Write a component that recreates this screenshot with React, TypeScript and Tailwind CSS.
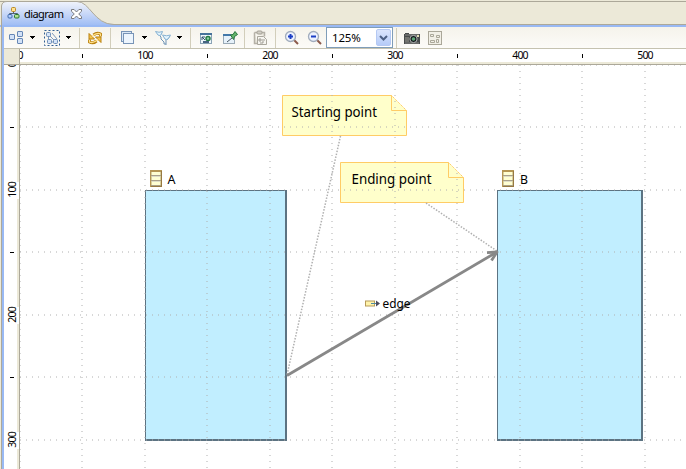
import React from "react";

const ui = "font-['Noto_Sans','DejaVu_Sans',sans-serif]";

function Icon({ children, className = "" }: { children: React.ReactNode; className?: string }) {
  return (
    <svg width="16" height="16" viewBox="0 0 16 16" className={`block shrink-0 ${className}`} fill="none">
      {children}
    </svg>
  );
}

function Caret({ className = "" }: { className?: string }) {
  return (
    <svg width="5" height="3" viewBox="0 0 5 3" className={`block shrink-0 ${className}`} shapeRendering="crispEdges">
      <path d="M0 0h5v1H4v1H3v1H2V2H1V1H0z" fill="#000" />
    </svg>
  );
}

function Sep({ className = "" }: { className?: string }) {
  return <div className={`h-[20px] w-px shrink-0 bg-[#d2cebb] ${className}`} />;
}

function RefreshArrow() {
  return (
    <>
      <path d="M13.5 6.5V4Q10 2 6.5 5" stroke="#b9800f" strokeWidth="3" />
      <path d="M2 3.5v5.500h5.500z" fill="#f5c34a" stroke="#b9800f" strokeLinejoin="round" />
      <path d="M13.500 6V4Q10 2 5 6.500" stroke="#ffe08a" strokeWidth="1.300" />
    </>
  );
}

function Magnifier({ plus }: { plus: boolean }) {
  return (
    <>
      <path d="M10 10l4 4" stroke="#8b5a4a" strokeWidth="2" />
      <circle cx="6.5" cy="6.5" r="5" fill="#edf2ff" stroke="#a2adbd" strokeWidth="1.3" />
      <path d="M4 6.5h5" stroke="#1b3fc4" strokeWidth="2" />
      {plus && <path d="M6.5 4v5" stroke="#1b3fc4" strokeWidth="2" />}
    </>
  );
}

function TabBar() {
  return (
    <div className="relative h-[27px] w-full border-b-2 border-[#99b9f4] bg-[#ece9d8]">
      <svg width="686" height="27" viewBox="0 0 686 27" className="absolute left-0 top-0 block">
        <defs>
          <linearGradient id="tab" x1="0" y1="0" x2="0" y2="1">
            <stop offset="0" stopColor="#f1f4fb" />
            <stop offset=".5" stopColor="#c6d6f7" />
            <stop offset="1" stopColor="#99b9f4" />
          </linearGradient>
        </defs>
        <path d="M0 1.5H686M100 24.5H686" stroke="#aca899" />
        <path d="M1.5 27V6Q2 1.5 7 1.5H77C90 1.5 94 24.5 114 24.5V27z" fill="url(#tab)" />
        <path d="M1.5 27V6Q2 1.5 7 1.5H77C90 1.5 94 24.5 114 24.5" fill="none" stroke="#aca899" />
        <path d="M2 25h684v2H2z" fill="#99b9f4" />
      </svg>
      <div className="relative flex h-[25px] items-center pl-[7px] pt-[2px]">
        <svg width="13" height="13" viewBox="0 0 13 13" className="block" fill="none">
          <path d="M6.5 4v3M2.5 9V6.5h8V9" stroke="#526273" />
          <rect x="4.5" y=".5" width="4" height="4" rx="1" fill="#ffe292" stroke="#b88925" />
          <rect x="1" y="7.5" width="4" height="3.5" rx="1" fill="#b4ceff" stroke="#3c68aa" />
          <rect x="7.5" y="7.5" width="4.5" height="3.5" rx="1" fill="#b2e092" stroke="#28782e" />
        </svg>
        <span className={`ml-[4px] w-[39px] whitespace-nowrap text-[11px] leading-[14px] tracking-[-0.55px] text-black ${ui}`}>
          diagram
        </span>
        <svg width="11" height="10" viewBox="0 0 11 10" className="ml-[8px] block">
          <path
            d="M.5 .5h2.6L5.5 3 7.9.5h2.6v1.8L7.7 5l2.8 2.7v1.8H7.9L5.5 7 3.1 9.5H.5V7.7L3.3 5 .5 2.3z"
            fill="#fff"
            stroke="#6e6e70"
            strokeWidth=".9"
          />
        </svg>
      </div>
    </div>
  );
}

function Toolbar() {
  return (
    <div className="flex h-[22px] items-center border-b border-[#c5c2b0] bg-gradient-to-b from-[#f5f3eb] to-[#fcfbf8]">
      <Icon className="ml-[5px]">
        <g fill="#d3e2f7" stroke="#6687b5">
          <rect x=".5" y="4.5" width="5" height="5" rx=".5" />
          <rect x="8.5" y="1.5" width="5" height="5" rx=".5" />
          <rect x="8.5" y="8.5" width="5" height="5" rx=".5" />
        </g>
      </Icon>
      <Caret className="ml-[5px]" />
      <Icon className="ml-[9px]">
        <rect x=".5" y=".5" width="15" height="15" stroke="#315e92" strokeDasharray="2 2" />
        <path d="M4.5 5v7M5 5l7 7M4 12h8M8 3l5 6" stroke="#7d99bd" />
        <g fill="#d5e4f8" stroke="#6d8db7">
          <rect x="2.5" y="2.5" width="4" height="4" rx="1" />
          <rect x="3.5" y="9.5" width="4" height="4" rx="1" />
          <rect x="9.5" y="9.5" width="4" height="4" rx="1" />
        </g>
      </Icon>
      <Caret className="ml-[6px]" />
      <Sep className="ml-[8px]" />
      <Icon className="ml-[7px]">
        <RefreshArrow />
        <g transform="rotate(180 8 8)">
          <RefreshArrow />
        </g>
      </Icon>
      <Sep className="ml-[7px]" />
      <Icon className="ml-[10px]">
        <rect x=".5" y="1.5" width="10" height="10" fill="#dae8f7" stroke="#7894b7" />
        <rect x="2.5" y="3.5" width="10" height="10" fill="#edf5fd" stroke="#7894b7" />
      </Icon>
      <Caret className="ml-[5px]" />
      <Icon className="ml-[8px]">
        <path d="M2 3l4 4v2M7 2L5 5M9 6l2 4v5M15 6l-3 4M6 9l3 3v2h2" stroke="#6f93b5" />
        <path d="M.5 1.5q3.5 1.5 7 0L6 5q-2 1-3 0zM7.5 5q4 1.5 8 0l-2.5 4q-2 1-3 0z" fill="#e3f4fe" stroke="#89b3d2" />
      </Icon>
      <Caret className="ml-[6px]" />
      <Sep className="ml-[8px]" />
      <Icon className="ml-[8px]">
        <rect x="1.5" y="3.5" width="11" height="10" fill="#f0f7fc" stroke="#8ba3b6" />
        <path d="M1 4h12" stroke="#467199" strokeWidth="2" />
        <path d="M3 7l3 3M3 7h3M3 7v3" stroke="#334e6d" />
        <circle cx="9" cy="8.5" r="2" fill="#8fd0a2" stroke="#257a44" strokeWidth="1.5" />
        <path d="M4 12h6" stroke="#476582" strokeWidth="2" />
      </Icon>
      <Icon className="ml-[8px]">
        <rect x=".5" y="4.5" width="11" height="9" fill="#e6f1fa" stroke="#9aaab6" />
        <path d="M0 5h8" stroke="#4378a9" strokeWidth="2" />
        <path d="M4 12l5-4" stroke="#4a5862" />
        <path d="M7.5 5l2.5-.5 2-3 2.5 3-3 2-1 3z" fill="#65b56c" stroke="#28763b" />
      </Icon>
      <Sep className="ml-[5px]" />
      <Icon className="ml-[8px]">
        <path d="M1.5 2.5h10v4M1.5 2.5v11h3" fill="#e7e4da" stroke="#b5b1a7" strokeWidth="1.5" />
        <rect x="4" y="1" width="5" height="3" rx="1" fill="#d2cfc6" stroke="#a5a197" />
        <path d="M4.5 6.5h6l3 3v5h-9z" fill="#f6f5f0" stroke="#aaa79d" />
        <path d="M6 9h2v2H6zM9 10h3M7 13h3v-2" stroke="#9e9b93" />
      </Icon>
      <Sep className="ml-[6px]" />
      <Icon className="ml-[8px]"><Magnifier plus /></Icon>
      <Icon className="ml-[7px]"><Magnifier plus={false} /></Icon>
      <div className="ml-[3px] flex h-[21px] w-[67px] shrink-0 items-center justify-between border border-[#7f9db9] bg-white pl-[5px] pr-px">
        <span className={`whitespace-nowrap text-[11.5px] leading-[14px] tracking-[-0.2px] text-black ${ui}`}>125%</span>
        <div className="flex h-[17px] w-[15px] items-center justify-center rounded-[2px] border border-[#b5c9f3] bg-gradient-to-b from-[#dce6fd] to-[#b5cbf8]">
          <svg width="9" height="6" viewBox="0 0 9 6"><path d="M1 1l3.5 3.5L8 1" fill="none" stroke="#4d6185" strokeWidth="2" /></svg>
        </div>
      </div>
      <Sep className="ml-[3px]" />
      <Icon className="ml-[7px]">
        <path d="M1 3h4v1h11v10H0V4h1z" fill="#484b4b" />
        <path d="M1 5h14M1 13h14" stroke="#898a87" />
        <path d="M1 7h4v5H1z" fill="#73746f" />
        <circle cx="9.5" cy="9" r="3.6" fill="#15191c" stroke="#b1b5b4" />
        <circle cx="9.5" cy="9" r="1.8" fill="#5ba574" />
        <path d="M13 5h2v2h-2z" fill="#e2dfb7" />
      </Icon>
      <Icon className="ml-[7px]">
        <rect x="1.5" y="1.5" width="13" height="13" fill="#f1efe6" stroke="#aaa799" />
        <path d="M3.500 4.500h3v2h-3zM9.500 5.500h3v2h-3zM3.500 10.500h4v2h-4zM9.500 9.500h2v3h-2z" stroke="#aaa799" />
      </Icon>
    </div>
  );
}

const marks = ["0", "", "100", "", "200", "", "300", "", "400", "", "500"];

function TopRuler() {
  return (
    <div className="flex h-[16px]">
      <div className="h-[16px] w-[16px] shrink-0 border-b border-r border-[#aca899] bg-[#ece9d8]" />
      <div className="flex-1 overflow-hidden border-b border-[#aca899] bg-[#ece9d8]">
        <div className="ml-[-31.25px] flex h-[13px] w-[720px] bg-white">
          {marks.map((m, i) => (
            <div key={i} className="flex h-[13px] w-[62.5px] shrink-0 items-center justify-center">
              {m ? (
                <span className={`text-[10.5px] leading-[13px] tracking-[-0.8px] text-black ${ui}`}>{m}</span>
              ) : (
                <div className="h-[4px] w-px bg-black" />
              )}
            </div>
          ))}
        </div>
      </div>
    </div>
  );
}

function SideRuler() {
  return (
    <div className="h-full w-[16px] shrink-0 overflow-hidden border-r border-[#aca899] bg-white">
      <div className="mt-[-31.25px] flex flex-col">
        {marks.slice(0, 7).map((m, i) => (
          <div key={i} className="flex h-[62.5px] w-[15px] shrink-0">
            <div className="flex w-[13px] items-center justify-center pl-[2px]">
              {m ? (
                <span className={`rotate-180 text-[10.5px] leading-[12px] tracking-[-0.8px] text-black [writing-mode:vertical-rl] ${ui}`}>{m}</span>
              ) : (
                <div className="h-px w-[4px] bg-black" />
              )}
            </div>
            <div className="flex w-[2px] flex-col bg-[#ece9d8]">
              {m && <div className={`my-auto w-[2px] bg-white ${m === "0" ? "h-[9px]" : "h-[17px]"}`} />}
            </div>
          </div>
        ))}
      </div>
    </div>
  );
}

const columns = [20, 82, 145, 207, 270, 332, 395, 457, 520, 582, 645];
const rows = [0, 62, 125, 187, 250, 312, 375];

function Label({ x, y, size, width, children }: { x: number; y: number; size: number; width: number; children: string }) {
  return (
    <text x={x} y={y} fontSize={size} textLength={width} lengthAdjust="spacingAndGlyphs" fill="#000" className={ui}>
      {children}
    </text>
  );
}

function Note({ x, y, w }: { x: number; y: number; w: number }) {
  return (
    <g transform={`translate(${x} ${y})`} fill="#ffffcb" stroke="#ffcc66">
      <path d={`M.5 .5H${w - 15.5}l15 15v25H.5z`} stroke="none" />
      <path d={`M${w - 15.5} .5H.5v40H${w - 0.5}v-25h-15V.5`} />
      <path d={`M${w - 15.5} .5l15 15`} strokeDasharray="1.5 .7" />
    </g>
  );
}

function NodeBox({ x, w }: { x: number; w: number }) {
  return (
    <g shapeRendering="crispEdges">
      <rect x={x} y="125" width={w} height="251" fill="#5c7382" />
      <rect x={x + 1} y="126" width={w - 3} height="248" fill="#c1eeff" />
    </g>
  );
}

function NodeIcon({ x }: { x: number }) {
  return (
    <g transform={`translate(${x} 105)`} shapeRendering="crispEdges">
      <rect width="12" height="17" fill="#b59653" />
      <rect x="1" y="2" width="10" height="14" fill="#d9cf9c" />
      <rect x="2" y="2" width="8" height="13" fill="#ffffd2" />
      <path d="M1 5.5h10M1 10.5h10M1 15.5h10" stroke="#a9a08a" />
      <path d="M2 6.5h8M2 11.5h8" stroke="#dedec8" />
      <path d="M1 16.5h11M11.5 1v16" stroke="#977941" />
    </g>
  );
}

/* The viewBox starts at the canvas edge, so x values share the window origin. */
function Canvas() {
  return (
    <svg width="666" height="404" viewBox="20 0 666 404" className="block shrink-0 bg-white" fill="none">
      <NodeBox x={145} w={142} />
      <NodeBox x={497} w={146} />
      <Note x={282} y={30} w={125} />
      <Note x={340} y={97} w={124} />
      <g stroke="#b0b0b0" strokeOpacity=".5" shapeRendering="crispEdges">
        {columns.map((x) => (
          <path key={x} d={`M${x + (x === 20 ? 0.5 : 0)} 0V404`} strokeWidth={x === 20 ? 1 : 2} strokeDasharray="1 5" />
        ))}
        {rows.map((y) => (
          <path key={y} d={`M20 ${y}H686`} strokeWidth="2" strokeDasharray="1 5" />
        ))}
      </g>
      <path d="M340.5 71L287 310M426 138l71 48" stroke="#b0b0b0" strokeWidth="1.5" strokeDasharray="1.5 1.5" />
      <path d="M287 310.5L496 187.5" stroke="#888" strokeWidth="2.8" />
      <path d="M487 187.7l10-.7-5.5 8.5" stroke="#888" strokeWidth="2.8" strokeLinejoin="round" />
      <Label x={291.5} y={52} size={14.5} width={85.5}>Starting point</Label>
      <Label x={351.5} y={119} size={14.5} width={80}>Ending point</Label>
      <NodeIcon x={150} />
      <NodeIcon x={502} />
      <Label x={167.5} y={119} size={12.5} width={8}>A</Label>
      <Label x={520} y={119} size={12.5} width={8}>B</Label>
      <rect x="365.5" y="236" width="9" height="5" fill="#fff3aa" stroke="#b69a58" />
      <path d="M371 238.5h6" stroke="#4e8ba1" />
      <path d="M376 235.5l4 3-4 3z" fill="#4c4b5e" />
      <Label x={382.5} y={243} size={13} width={28}>edge</Label>
    </svg>
  );
}

export default function App() {
  return (
    <div className="h-[469px] w-[686px] overflow-hidden bg-white">
      <TabBar />
      <div className="flex h-[442px]">
        <div className="h-full w-[4px] shrink-0 bg-[linear-gradient(90deg,#ece9d8_1px,#aca899_1px,#aca899_2px,#99b9f4_2px)]" />
        <div className="flex w-[682px] flex-col">
          <Toolbar />
          <TopRuler />
          <div className="flex h-[404px]">
            <SideRuler />
            <Canvas />
          </div>
        </div>
      </div>
    </div>
  );
}
